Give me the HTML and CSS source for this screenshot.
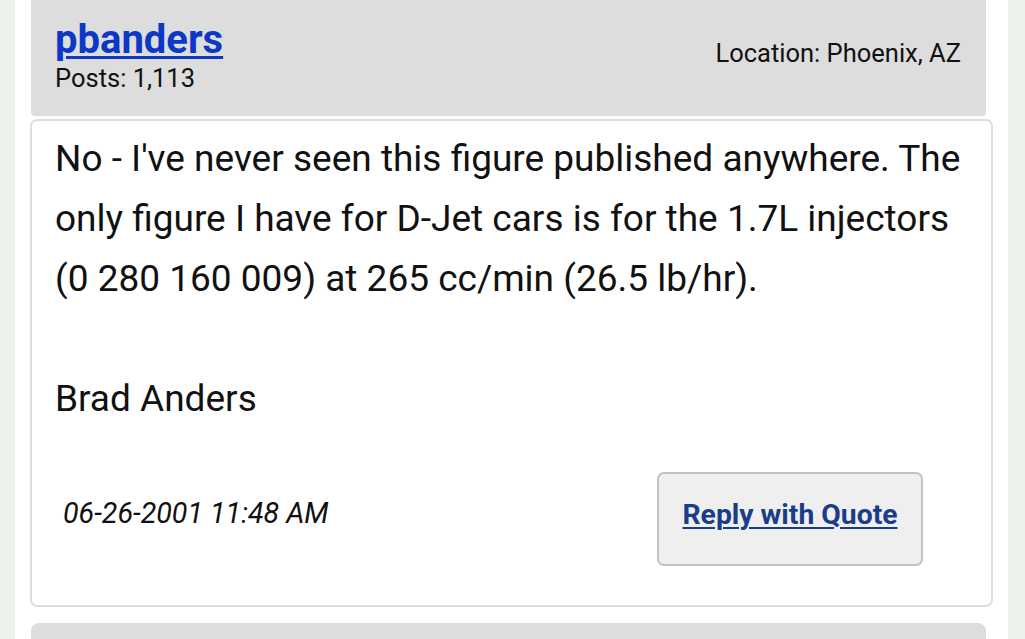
FILE: index.html
```html
<!DOCTYPE html>
<html>
<head>
<meta charset="utf-8">
<link rel="stylesheet" href="styles.css">
</head>
<body>
<div class="page">
  <div class="column">
    <div class="post-head">
      <div class="user">
        <a class="username" href="#">pbanders</a>
        <div class="posts">Posts: 1,113</div>
      </div>
      <div class="location">Location: Phoenix, AZ</div>
    </div>
    <div class="post-card">
      <div class="post-body">No - I've never seen this figure published anywhere. The only figure I have for D-Jet cars is for the 1.7L injectors (0 280 160 009) at 265 cc/min (26.5 lb/hr).<br><br>Brad Anders</div>
      <div class="post-foot">
        <div class="date">06-26-2001 11:48 AM</div>
        <div class="reply"><a href="#">Reply with Quote</a></div>
      </div>
    </div>
    <div class="post-head next"></div>
  </div>
</div>
</body>
</html>
```

FILE: styles.css
```css
html, body {
  margin: 0;
  padding: 0;
  background: #eaf2ea;
  font-family: Roboto, "Noto Sans", sans-serif;
  color: #111111;
}
.page {
  display: flex;
  height: 639px;
  overflow: hidden;
  padding: 0 17px 0 15px;
}
.column {
  flex: 1;
  background: #ffffff;
  padding: 0 15px 0 15px;
  display: flex;
  flex-direction: column;
}
.post-head {
  flex-shrink: 0;
  background: #dddddd;
  margin: 0 7px 0 1px;
  height: 116px;
  box-sizing: border-box;
  padding: 18px 25px 0 24px;
  display: flex;
  justify-content: space-between;
  align-items: flex-start;
  border-radius: 0 0 4px 4px;
}
.post-head.next {
  margin-top: 16px;
  border-radius: 8px 8px 0 0;
}
.username {
  display: block;
  font-size: 40px;
  font-weight: 700;
  color: #0b38c6;
  line-height: 44px;
  text-decoration: underline;
  text-decoration-thickness: 3px;
  text-underline-offset: 3px;
}
.posts {
  font-size: 25.5px;
  line-height: 32px;
}
.location {
  font-size: 25.5px;
  line-height: 32px;
  margin-top: 19px;
}
.post-card {
  flex-shrink: 0;
  margin-top: 3px;
  border: 2px solid #dedede;
  border-radius: 7px;
  padding: 8px 24px 39px 23px;
}
.post-body {
  font-size: 37px;
  line-height: 60px;
}
.post-foot {
  margin-top: 43px;
  display: flex;
  justify-content: space-between;
  align-items: center;
  padding-left: 8px;
}
.date {
  font-size: 28.6px;
  font-style: italic;
  margin-bottom: 12px;
}
.reply {
  width: 266px;
  height: 94px;
  box-sizing: border-box;
  background: #efefef;
  border: 2px solid #c2c2c2;
  border-radius: 7px;
  display: flex;
  align-items: center;
  justify-content: center;
  padding-bottom: 10px;
  margin-right: 44px;
}
.reply a {
  font-size: 28.3px;
  font-weight: 700;
  color: #1a3d8a;
  text-decoration: underline;
  text-decoration-thickness: 2px;
  text-underline-offset: 3px;
}
```
